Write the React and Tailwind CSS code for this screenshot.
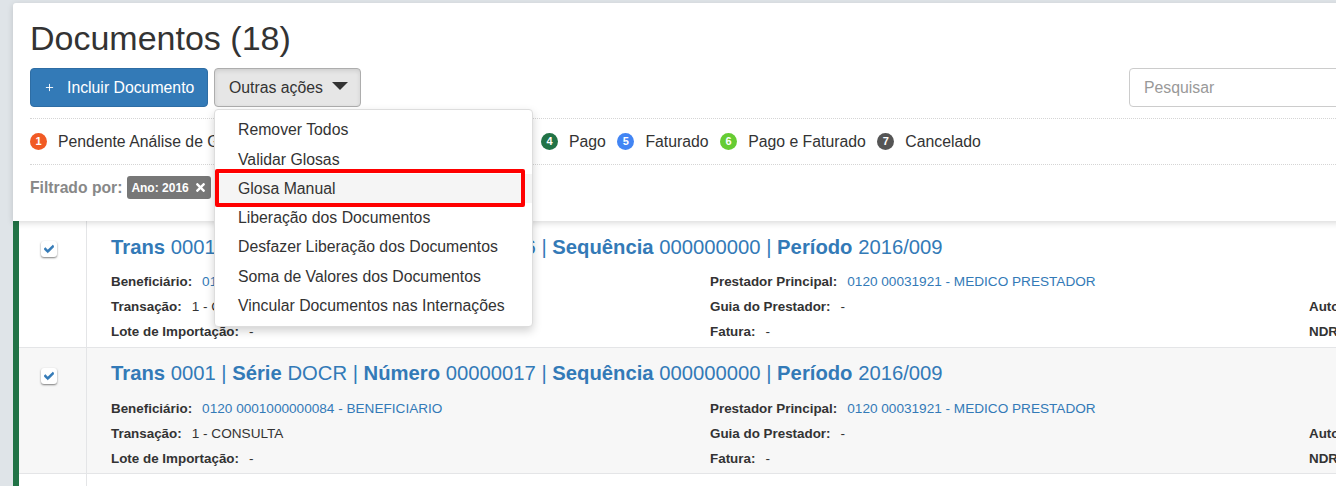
import React from 'react';
import { Plus } from 'lucide-react';
import { FaCheck, FaTimes } from 'react-icons/fa';

const statuses = [
  { n: 4, label: 'Pago', color: 'bg-[#217346]' },
  { n: 5, label: 'Faturado', color: 'bg-[#4285f4]' },
  { n: 6, label: 'Pago e Faturado', color: 'bg-[#66cc33]' },
  { n: 7, label: 'Cancelado', color: 'bg-[#555555]' },
];

const menu = [
  'Remover Todos',
  'Validar Glosas',
  'Glosa Manual',
  'Liberação dos Documentos',
  'Desfazer Liberação dos Documentos',
  'Soma de Valores dos Documentos',
  'Vincular Documentos nas Internações',
];

const Badge = ({ n, color }) => (
  <span className={`flex h-[17px] w-[17px] shrink-0 items-center justify-center rounded-full text-[11px] font-bold text-white ${color}`}>{n}</span>
);

const Field = ({ label, value, link }) => (
  <div className="flex h-[25px] items-center whitespace-nowrap text-[13.4px]">
    <b className="mr-[10px] font-bold">{label}</b>
    <span className={`text-[13.6px] ${link ? 'text-[#337ab7]' : ''}`}>{value}</span>
  </div>
);

const DocRow = ({ numero, shaded }) => (
  <div className={`flex border-b border-[#e4e5e7] ${shaded ? 'bg-[#f7f7f7] h-[126px]' : 'bg-white h-[127px]'}`}>
    <div className="flex w-[68px] shrink-0 justify-center border-r border-[#e4e5e7] pt-[20px]">
      <span className="mr-[7px] flex h-[16px] w-[16px] items-center justify-center rounded-[3px] bg-white shadow-[0_1px_2px_rgba(0,0,0,0.5)]">
        <FaCheck size={10} stroke="currentColor" strokeWidth={40} className="text-[#337ab7]" />
      </span>
    </div>
    <div className={`pl-[24px] ${shaded ? 'pt-[13px]' : 'pt-[14px]'}`}>
      <div className={`whitespace-nowrap text-[20.25px] leading-[24px] text-[#337ab7] ${shaded ? 'mb-[12px]' : 'mb-[11px]'}`}>
        <b>Trans</b> 0001 | <b>Série</b> DOCR | <b>Número</b> {numero} | <b>Sequência</b> 000000000 | <b>Período</b> 2016/009
      </div>
      <div className="grid grid-cols-[599px_599px_300px] text-[#333333]">
        <Field label="Beneficiário:" value="0120 0001000000084 - BENEFICIARIO" link />
        <Field label="Prestador Principal:" value="0120 00031921 - MEDICO PRESTADOR" link />
        <div />
        <Field label="Transação:" value="1 - CONSULTA" />
        <Field label="Guia do Prestador:" value="-" />
        <Field label="Autorização:" value="-" />
        <Field label="Lote de Importação:" value="-" />
        <Field label="Fatura:" value="-" />
        <Field label="NDR:" value="-" />
      </div>
    </div>
  </div>
);

export default function App() {
  return (
    <div className="relative h-[486px] w-[1336px] overflow-hidden bg-[#dfe4e8] pl-[13px] pt-[3px] font-['Liberation_Sans',Arial,sans-serif] text-[#333333]">
      <div className="w-[1600px]">
        {/* Cabecalho */}
        <div className="relative z-10 h-[218px] rounded-tl-[3px] bg-white px-[17px] shadow-[0_2px_6px_rgba(0,0,0,0.15)]">
          <h1 className="flex h-[65px] items-center pt-[4px] text-[34px] leading-none">Documentos (18)</h1>
          <div className="flex h-[50px] items-start">
            <button className="flex h-[39px] w-[178px] items-center rounded-[4px] border border-[#2e6da4] bg-[#337ab7] pl-[13px] text-[15.8px] text-white">
              <Plus size={11} strokeWidth={2} className="mr-[12px]" />
              Incluir Documento
            </button>
            <button className="ml-[6px] flex h-[39px] w-[147px] items-center rounded-[4px] border border-[#adadad] bg-[#e6e6e6] pl-[14px] text-[15.8px] shadow-[inset_0_2px_4px_rgba(0,0,0,0.1)]">
              Outras ações
              <span className="ml-[9px] mb-[4px] h-0 w-0 border-x-[8px] border-t-[8px] border-x-transparent border-t-[#333333]" />
            </button>
            <div className="ml-[768px] flex h-[39px] w-[400px] items-center rounded-[4px] border border-[#cccccc] pl-[14px] text-[15.8px] text-[#999999]">Pesquisar</div>
          </div>
          <div className="flex h-[47px] items-center border-y border-dotted border-[#d5d5d5] text-[15.8px]">
            <Badge n={1} color="bg-[#f15a24]" />
            <span className="ml-[11px] w-[483px] whitespace-nowrap">Pendente Análise de Glosas</span>
            {statuses.map((s) => (
              <span key={s.n} className="mr-[11.5px] flex items-center">
                <Badge n={s.n} color={s.color} />
                <span className="ml-[11px] whitespace-nowrap">{s.label}</span>
              </span>
            ))}
          </div>
          <div className="flex h-[45px] items-center">
            <b className="text-[15.7px] text-[#888888]">Filtrado por:</b>
            <span className="ml-[5px] flex h-[23px] items-center rounded-[3px] bg-[#777777] pl-[4px] pr-[4px] text-[12px] font-bold text-white">
              Ano: 2016
              <FaTimes size={13} className="ml-[5px]" />
            </span>
          </div>
        </div>

        {/* Lista de documentos */}
        <div className="border-l-[6px] border-[#217346] bg-white">
          <DocRow numero="00000016" />
          <DocRow numero="00000017" shaded />
          <div className="h-[20px]">
            <div className="h-full w-[68px] border-r border-[#e4e5e7]" />
          </div>
        </div>
      </div>

      {/* Menu aberto */}
      <div className="absolute left-[214px] top-[109px] z-20 h-[218px] w-[319px] rounded-[4px] border border-[#dddddd] bg-white pt-[5.5px] text-[15.8px] shadow-[0_4px_10px_rgba(0,0,0,0.18)]">
        {menu.map((item) => (
          <div key={item} className={`flex h-[29.3px] items-center whitespace-nowrap pl-[23px] ${item === 'Glosa Manual' ? 'bg-[#f5f5f5]' : ''}`}>{item}</div>
        ))}
      </div>
      <div className="absolute left-[215px] top-[169px] z-30 h-[38px] w-[310px] rounded-[2px] border-[4px] border-[#ff0000]" />
    </div>
  );
}
